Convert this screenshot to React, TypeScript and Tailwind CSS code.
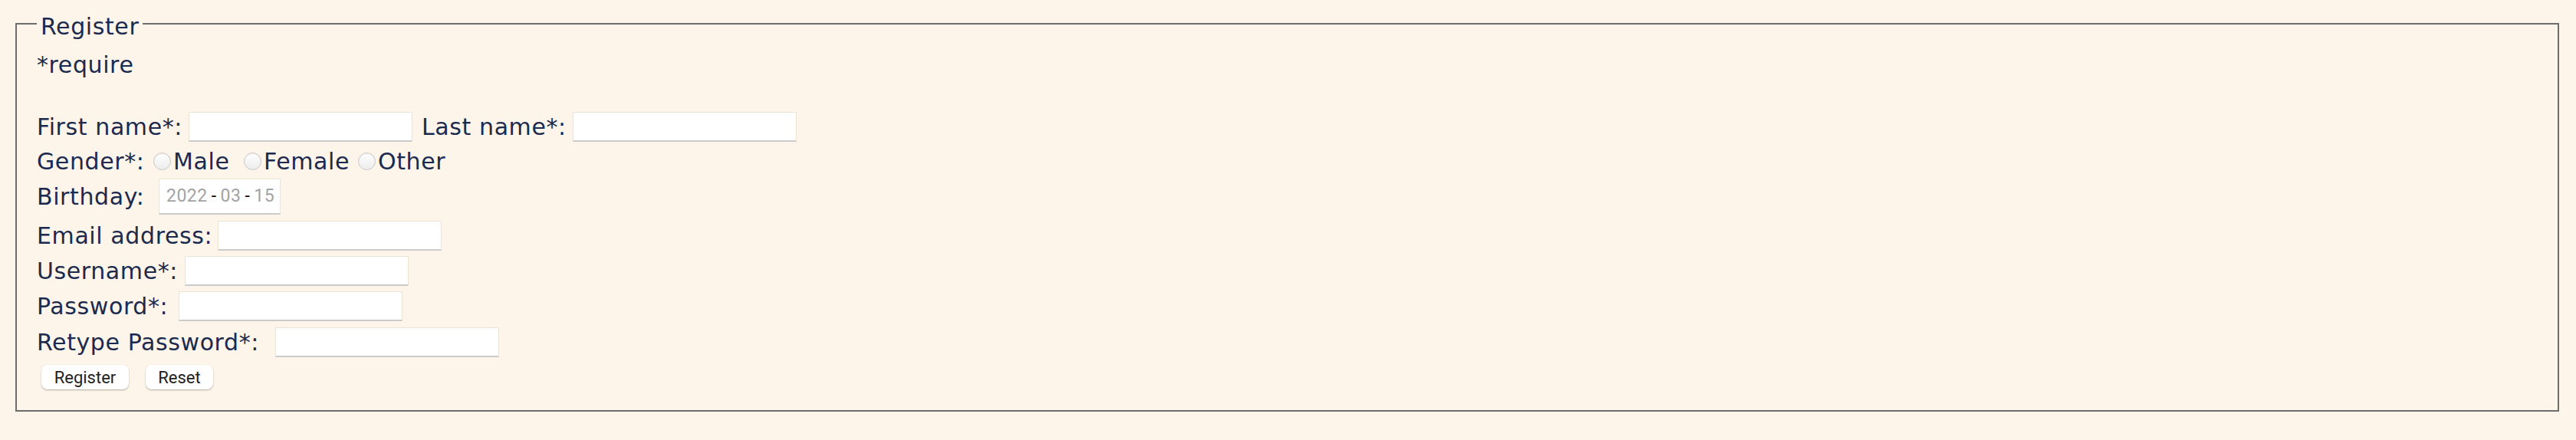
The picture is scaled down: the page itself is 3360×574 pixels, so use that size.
import React from 'react';

const inputCls =
  'h-[39px] w-[292px] bg-white border border-[#ede3d3] border-b-2 border-b-[#cbcbcb] outline-none';

const radioCls =
  'h-[23px] w-[23px] shrink-0 appearance-none rounded-full border border-[#c9c9c9] bg-linear-to-b from-white to-[#ececec] shadow-[inset_0_1px_1px_rgba(0,0,0,0.08)]';

const btnCls =
  "h-[32px] rounded-[8px] bg-white font-['Roboto',sans-serif] text-[22px] tracking-normal text-[#222] shadow-[0_1px_2px_rgba(0,0,0,0.3)]";

export default function App() {
  return (
    <div className="min-h-[574px] whitespace-nowrap bg-[#fdf5e9] pt-[10px] pl-[20px] pr-[22px] font-['DejaVu_Sans',sans-serif] text-[30px] tracking-[0.6px] text-[#1b2a4e]">
      <form onSubmit={(e) => e.preventDefault()}>
        <fieldset className="border-2 border-[#6d6d6d] pl-[26px] pb-[20px]">
          <legend className="px-[5px] pt-[7px] leading-[35px]">Register</legend>

          <div className="flex h-[65px] items-center">*require</div>

          {/* name */}
          <div className="mt-[25px] flex h-[46px] items-center">
            <label className="w-[198px] shrink-0">First name*:</label>
            <input type="text" className={inputCls} />
            <label className="w-[209px] shrink-0 pl-[12px]">Last name*:</label>
            <input type="text" className={inputCls} />
          </div>

          {/* gender */}
          <div className="flex h-[45px] items-center">
            <span className="w-[152px] shrink-0">Gender*:</span>
            <input type="radio" name="gender" className={radioCls} />
            <span className="w-[95px] shrink-0 pl-[3px]">Male</span>
            <input type="radio" name="gender" className={radioCls} />
            <span className="w-[126px] shrink-0 pl-[3px]">Female</span>
            <input type="radio" name="gender" className={radioCls} />
            <span className="pl-[3px]">Other</span>
          </div>

          {/* birthday */}
          <div className="flex h-[47px] items-center">
            <label className="w-[159px] shrink-0">Birthday:</label>
            <div className="flex h-[47px] w-[159px] items-center gap-[5px] border border-[#ede3d3] border-b-2 border-b-[#cbcbcb] bg-white pl-[9px] font-['Roboto',sans-serif] text-[23px] tracking-[0.5px]">
              <span className="text-[#a3a3a3]">2022</span>
              <span className="text-[#111]">-</span>
              <span className="text-[#a3a3a3]">03</span>
              <span className="text-[#111]">-</span>
              <span className="text-[#a3a3a3]">15</span>
            </div>
          </div>

          <div className="mt-[4px] flex h-[46px] items-center">
            <label className="w-[236px] shrink-0">Email address:</label>
            <input type="email" className={inputCls} />
          </div>
          <div className="flex h-[46px] items-center">
            <label className="w-[193px] shrink-0">Username*:</label>
            <input type="text" className={inputCls} />
          </div>
          <div className="flex h-[47px] items-center">
            <label className="w-[185px] shrink-0">Password*:</label>
            <input type="password" className={inputCls} />
          </div>
          <div className="flex h-[46px] items-center">
            <label className="w-[311px] shrink-0">Retype Password*:</label>
            <input type="password" className={inputCls} />
          </div>

          {/* actions */}
          <div className="flex h-[46px] items-center gap-[22px] pl-[6px]">
            <button type="submit" className={`w-[114px] ${btnCls}`}>Register</button>
            <button type="reset" className={`w-[88px] ${btnCls}`}>Reset</button>
          </div>
        </fieldset>
      </form>
    </div>
  );
}
